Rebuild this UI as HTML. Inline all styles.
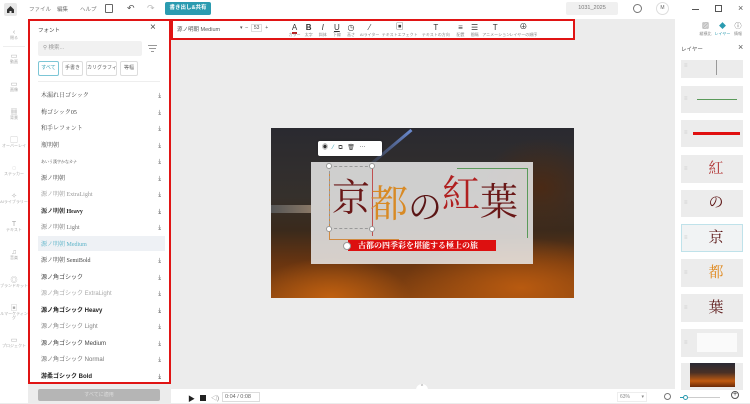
<!DOCTYPE html>
<html><head><meta charset="utf-8"><style>
*{margin:0;padding:0;box-sizing:border-box}
body{width:750px;height:403px;overflow:hidden;background:#ececec;font-family:"Liberation Sans","Noto Sans CJK JP",sans-serif;position:relative;color:#333}
.abs{position:absolute}
.t{font-size:5px;color:#888}
</style></head><body>
<div class="abs" style="left:0;top:0;width:750px;height:19px;background:#fff"></div>
<div class="abs" style="left:4px;top:3px;width:13px;height:13px;background:#e8e8e8;border-radius:2px"></div>
<svg class="abs" style="left:6px;top:5px" width="9" height="9" viewBox="0 0 9 9"><path d="M1 4.5L4.5 1 8 4.5V8H5.5V6h-2v2H1z" fill="#333"/></svg>
<div class="abs t" style="left:29px;top:5px;font-size:5.5px;color:#777">ファイル</div>
<div class="abs t" style="left:57px;top:5px;font-size:5.5px;color:#777">編集</div>
<div class="abs t" style="left:80px;top:5px;font-size:5.5px;color:#777">ヘルプ</div>
<div class="abs" style="left:105px;top:4px;width:8px;height:9px;border:1px solid #666;border-radius:1px"></div>
<div class="abs" style="left:127px;top:3px;font-size:9px;color:#555">↶</div>
<div class="abs" style="left:147px;top:3px;font-size:9px;color:#bbb">↷</div>
<div class="abs" style="left:165px;top:2px;width:46px;height:13px;background:#2b9bb0;border-radius:2px;color:#fff;font-size:5.5px;font-weight:bold;text-align:center;line-height:13px">書き出し&amp;共有</div>
<div class="abs" style="left:566px;top:2px;width:52px;height:13px;background:#f0f0f0;border-radius:2px;font-size:5.5px;color:#777;text-align:center;line-height:13px">1031_2025</div>
<div class="abs" style="left:633px;top:4px;width:9px;height:9px;border:1px solid #777;border-radius:50%"></div>
<div class="abs" style="left:656px;top:2px;width:13px;height:13px;border:1px solid #ddd;border-radius:50%;font-size:5px;text-align:center;line-height:11px;color:#666">M</div>
<div class="abs" style="left:692px;top:9px;width:7px;height:1px;background:#555"></div>
<div class="abs" style="left:715px;top:5px;width:7px;height:7px;border:1px solid #555"></div>
<div class="abs" style="left:738px;top:3px;font-size:9px;color:#555">×</div>

<div class="abs" style="left:0;top:19px;width:28px;height:384px;background:#fff"></div>
<div class="abs" style="left:0;top:19px;width:28px;font-size:4px;color:#aaa;text-align:center;line-height:1">
<div style="margin-top:10px;font-size:7px">‹</div><div>閉る</div>
<div style="height:1px;background:#eee;margin:6px 3px"></div>
<div style="margin-top:4px;font-size:7px">▭</div><div>動画</div>
<div style="margin-top:17px;font-size:7px">▭</div><div>画像</div>
<div style="margin-top:17px;font-size:7px">▦</div><div>背景</div>
<div style="margin-top:17px;font-size:7px">▢</div><div>オーバーレイ</div>
<div style="margin-top:17px;font-size:7px">◌</div><div>ステッカー</div>
<div style="margin-top:17px;font-size:7px">✧</div><div>AIライブラリー</div>
<div style="margin-top:17px;font-size:7px">T</div><div>テキスト</div>
<div style="margin-top:17px;font-size:7px">♫</div><div>音楽</div>
<div style="margin-top:17px;font-size:7px">◎</div><div>ブランドキット</div>
<div style="margin-top:17px;font-size:7px">▣</div><div>ルマーケティング</div>
<div style="margin-top:17px;font-size:7px">▭</div><div>プロジェクト</div>
</div>

<div class="abs" style="left:28px;top:19px;width:143px;height:365px;background:#fff;border:2px solid #e01414"></div>
<div class="abs" style="left:38px;top:26px;font-size:5.5px;color:#444">フォント</div>
<div class="abs" style="left:150px;top:22px;font-size:10px;color:#444">×</div>
<div class="abs" style="left:38px;top:41px;width:104px;height:15px;background:#f1f1f1;border-radius:2px;font-size:5.5px;color:#999;line-height:15px;padding-left:5px">⚲ 検索...</div>
<div class="abs" style="left:148px;top:45px;width:9px;height:1px;background:#999"></div>
<div class="abs" style="left:149px;top:48px;width:7px;height:1px;background:#999"></div>
<div class="abs" style="left:151px;top:51px;width:3px;height:1px;background:#999"></div>
<div class="abs" style="left:38px;top:61px;width:21px;height:15px;border:1px solid #7cc6d6;border-radius:2px;font-size:5px;text-align:center;line-height:13px;color:#2b9bb0">すべて</div>
<div class="abs" style="left:62px;top:61px;width:21px;height:15px;border:1px solid #ddd;border-radius:2px;font-size:5px;text-align:center;line-height:13px;color:#666">手書き</div>
<div class="abs" style="left:86px;top:61px;width:31px;height:15px;border:1px solid #ddd;border-radius:2px;font-size:5px;text-align:center;line-height:13px;color:#666;white-space:nowrap;overflow:hidden">カリグラフィ</div>
<div class="abs" style="left:120px;top:61px;width:18px;height:15px;border:1px solid #ddd;border-radius:2px;font-size:5px;text-align:center;line-height:13px;color:#666">等幅</div>
<div class="abs" style="left:38px;top:81px;width:122px;height:1px;background:#eee"></div>
<div class="abs" style="left:38px;top:236px;width:127px;height:15px;background:#eef1f5"></div>
<div class="abs" style="left:41px;top:88px;width:120px;font-size:6px;line-height:16.5px;font-family:'Liberation Serif','Noto Serif CJK SC',serif;color:#444">
<div>木漏れ日ゴシック<span style="float:right">⤓</span></div>
<div>梅ゴシック05<span style="float:right">⤓</span></div>
<div>和手レフォント<span style="float:right">⤓</span></div>
<div>瓶明朝<span style="float:right">⤓</span></div>
<div style="font-size:4px">あいう漢字かなカナ<span style="float:right;font-size:6px">⤓</span></div>
<div>源ノ明朝<span style="float:right">⤓</span></div>
<div style="color:#999">源ノ明朝 ExtraLight<span style="float:right;color:#444">⤓</span></div>
<div style="font-weight:bold;color:#222">源ノ明朝 Heavy<span style="float:right;font-weight:normal">⤓</span></div>
<div style="color:#777">源ノ明朝 Light<span style="float:right;color:#444">⤓</span></div>
<div style="color:#5ab3c8">源ノ明朝 Medium</div>
<div>源ノ明朝 SemiBold<span style="float:right">⤓</span></div>
<div style="font-family:'Liberation Sans','Noto Sans CJK JP',sans-serif">源ノ角ゴシック<span style="float:right">⤓</span></div>
<div style="font-family:'Liberation Sans','Noto Sans CJK JP',sans-serif;color:#aaa">源ノ角ゴシック ExtraLight<span style="float:right;color:#444">⤓</span></div>
<div style="font-family:'Liberation Sans','Noto Sans CJK JP',sans-serif;font-weight:bold;color:#222">源ノ角ゴシック Heavy<span style="float:right;font-weight:normal">⤓</span></div>
<div style="font-family:'Liberation Sans','Noto Sans CJK JP',sans-serif;color:#888">源ノ角ゴシック Light<span style="float:right;color:#444">⤓</span></div>
<div style="font-family:'Liberation Sans','Noto Sans CJK JP',sans-serif">源ノ角ゴシック Medium<span style="float:right">⤓</span></div>
<div style="font-family:'Liberation Sans','Noto Sans CJK JP',sans-serif;color:#777">源ノ角ゴシック Normal<span style="float:right;color:#444">⤓</span></div>
<div style="font-family:'Liberation Sans','Noto Sans CJK JP',sans-serif;font-weight:bold;color:#222">游柔ゴシック Bold<span style="float:right;font-weight:normal">⤓</span></div>
</div>
<div class="abs" style="left:38px;top:389px;width:122px;height:12px;background:#b5b5b5;border-radius:2px;font-size:5px;color:#ddd;text-align:center;line-height:12px">すべてに適用</div>

<div class="abs" style="left:171px;top:19px;width:404px;height:21px;background:#fff;border:2px solid #e01414"></div>
<div class="abs" style="left:177px;top:25px;font-size:5.5px;color:#555">源ノ明朝 Medium</div>
<div class="abs" style="left:240px;top:25px;font-size:5px;color:#555">▾ &nbsp;– &nbsp;<span style="border:1px solid #ddd;padding:0 2px">53</span> &nbsp;+</div>
<div class="abs" style="left:288px;top:21px;font-size:4px;color:#888;white-space:nowrap;word-spacing:0">
<span style="display:inline-block;text-align:center;width:13px"><span style="font-size:8px;color:#333;border-bottom:2px solid #b22">A</span><br>カラー</span>
<span style="display:inline-block;text-align:center;width:13px"><b style="font-size:8px;color:#333">B</b><br>太字</span>
<span style="display:inline-block;text-align:center;width:13px"><i style="font-size:8px;color:#333">I</i><br>斜体</span>
<span style="display:inline-block;text-align:center;width:13px"><u style="font-size:8px;color:#333">U</u><br>下線</span>
<span style="display:inline-block;text-align:center;width:13px"><span style="font-size:8px;color:#333">◷</span><br>高さ</span>
<span style="display:inline-block;text-align:center;width:22px"><span style="font-size:8px;color:#333">⁄</span><br>AIライター</span>
<span style="display:inline-block;text-align:center;width:36px"><span style="font-size:8px;color:#333">▣</span><br>テキストエフェクト</span>
<span style="display:inline-block;text-align:center;width:34px"><span style="font-size:8px;color:#333">T</span><br>テキストの方向</span>
<span style="display:inline-block;text-align:center;width:13px"><span style="font-size:8px;color:#333">≡</span><br>配置</span>
<span style="display:inline-block;text-align:center;width:13px"><span style="font-size:8px;color:#333">☰</span><br>間隔</span>
<span style="display:inline-block;text-align:center;width:26px"><span style="font-size:8px;color:#333">T</span><br>アニメーション</span>
<span style="display:inline-block;text-align:center;width:28px"><span style="font-size:8px;color:#333">⊕</span><br>レイヤーの順序</span>
</div>

<div class="abs" style="left:675px;top:19px;width:75px;height:384px;background:#fff"></div>
<div class="abs" style="left:697px;top:21px;width:53px;font-size:4px;color:#888;white-space:nowrap">
<span style="display:inline-block;text-align:center;width:17px"><span style="font-size:7px;color:#555">▨</span><br>縦横比</span><span style="display:inline-block;text-align:center;width:17px;color:#2b9bb0"><span style="font-size:7px">◆</span><br>レイヤー</span><span style="display:inline-block;text-align:center;width:14px"><span style="font-size:7px;color:#555">ⓘ</span><br>情報</span>
</div>
<div class="abs" style="left:675px;top:40px;width:75px;height:350px;background:#fff"></div>
<div class="abs" style="left:681px;top:45px;font-size:5.5px;color:#555">レイヤー</div>
<div class="abs" style="left:738px;top:42px;font-size:9px;color:#555">×</div>
<div class="abs" style="left:681px;top:60px;width:62px;height:18px;background:#ececec"></div>
<div class="abs" style="left:716px;top:60px;width:1px;height:15px;background:#999"></div>
<div class="abs" style="left:681px;top:86px;width:62px;height:27px;background:#ececec"></div>
<div class="abs" style="left:697px;top:99px;width:40px;height:1px;background:#5a9a5a"></div>
<div class="abs" style="left:681px;top:120px;width:62px;height:27px;background:#ececec"></div>
<div class="abs" style="left:693px;top:132px;width:47px;height:3px;background:#e01010"></div>
<div class="abs" style="left:681px;top:155px;width:62px;height:28px;background:#ececec;font:15px 'Liberation Serif','Noto Serif CJK SC',serif;color:#b03030;text-align:center;padding-left:8px;line-height:28px">紅</div>
<div class="abs" style="left:681px;top:190px;width:62px;height:27px;background:#ececec;font:15px 'Liberation Serif','Noto Serif CJK SC',serif;color:#5a1010;text-align:center;padding-left:8px;line-height:27px">の</div>
<div class="abs" style="left:681px;top:224px;width:62px;height:28px;background:#f1f3f4;border:1px solid #bfe2ea;font:15px 'Liberation Serif','Noto Serif CJK SC',serif;color:#5a1515;text-align:center;padding-left:8px;line-height:26px">京</div>
<div class="abs" style="left:681px;top:259px;width:62px;height:28px;background:#ececec;font:15px 'Liberation Serif','Noto Serif CJK SC',serif;color:#e08a20;text-align:center;padding-left:8px;line-height:28px">都</div>
<div class="abs" style="left:681px;top:294px;width:62px;height:28px;background:#ececec;font:15px 'Liberation Serif','Noto Serif CJK SC',serif;color:#5a1515;text-align:center;padding-left:8px;line-height:28px">葉</div>
<div class="abs" style="left:681px;top:329px;width:62px;height:28px;background:#ececec"></div>
<div class="abs" style="left:697px;top:333px;width:40px;height:19px;background:#fafafa"></div>
<div class="abs" style="left:681px;top:363px;width:62px;height:27px;background:#ececec"></div>
<div class="abs" style="left:690px;top:363px;width:45px;height:24px;background:linear-gradient(180deg,#2a2a35 0%,#4a3025 40%,#c05a10 75%,#6a2a08 100%)"></div>

<div class="abs" style="left:684px;top:0;width:8px;font-size:6px;color:#ccc;line-height:1">
<div style="position:absolute;top:63px">≡</div><div style="position:absolute;top:96px">≡</div><div style="position:absolute;top:130px">≡</div><div style="position:absolute;top:166px">≡</div><div style="position:absolute;top:200px">≡</div><div style="position:absolute;top:235px">≡</div><div style="position:absolute;top:270px">≡</div><div style="position:absolute;top:305px">≡</div><div style="position:absolute;top:340px">≡</div>
</div>

<div class="abs" style="left:271px;top:128px;width:303px;height:170px;background:
radial-gradient(ellipse 80px 40px at 60px 170px,#c06010,transparent),
radial-gradient(ellipse 120px 50px at 250px 160px,#b85a10,transparent),
radial-gradient(ellipse 60px 50px at 270px 60px,#4a2a15,transparent),
linear-gradient(180deg,#2a2a30 0%,#35302c 40%,#3a2a1c 60%,#6a3510 80%,#8a4510 100%)"></div>
<div class="abs" style="left:271px;top:205px;width:40px;height:8px;background:linear-gradient(90deg,#555,#887766)"></div>
<div class="abs" style="left:410px;top:130px;width:3px;height:60px;background:linear-gradient(#6a8ad0,transparent);transform:rotate(50deg);transform-origin:top"></div>
<div class="abs" style="left:311px;top:162px;width:222px;height:102px;background:rgba(235,235,235,0.85)"></div>
<div class="abs" style="left:329px;top:171px;width:1px;height:68px;background:#d08a40"></div>
<div class="abs" style="left:329px;top:239px;width:70px;height:1px;background:#d08a40"></div>
<div class="abs" style="left:457px;top:168px;width:70px;height:1px;background:#5a9a5a"></div>
<div class="abs" style="left:527px;top:168px;width:1px;height:70px;background:#5a9a5a"></div>
<div class="abs" style="left:329px;top:166px;width:44px;height:63px;border:1px dashed #999"></div>
<div class="abs" style="left:372px;top:166px;width:1px;height:70px;background:#c05050"></div>
<div class="abs" style="left:326px;top:163px;width:6px;height:6px;border-radius:50%;background:#fff;border:1px solid #999"></div>
<div class="abs" style="left:369px;top:163px;width:6px;height:6px;border-radius:50%;background:#fff;border:1px solid #999"></div>
<div class="abs" style="left:326px;top:226px;width:6px;height:6px;border-radius:50%;background:#fff;border:1px solid #999"></div>
<div class="abs" style="left:369px;top:226px;width:6px;height:6px;border-radius:50%;background:#fff;border:1px solid #999"></div>
<div class="abs" style="left:332px;top:180px;font:38px/1 'Liberation Serif','Noto Serif CJK SC',serif;white-space:nowrap"><span style="color:#6a1818">京</span><span style="color:#d88a25;position:relative;top:6px">都</span><span style="color:#5a1515;font-size:34px;position:relative;top:8px">の</span><span style="color:#b02020;position:relative;top:-4px">紅</span><span style="color:#6a1818;position:relative;top:4px">葉</span></div>
<div class="abs" style="left:348px;top:240px;width:148px;height:11px;background:#dd1010;color:#fff;font:bold 8px/11px 'Liberation Serif','Noto Serif CJK SC',serif;padding-left:10px;white-space:nowrap">古都の四季彩を堪能する極上の旅</div>
<div class="abs" style="left:343px;top:242px;width:8px;height:8px;border-radius:50%;background:#fff;border:1px solid #999"></div>
<div class="abs" style="left:318px;top:141px;width:64px;height:15px;background:#fff;border-radius:2px;box-shadow:0 0 2px rgba(0,0,0,.3);font-size:6px;line-height:15px;color:#333;padding-left:4px;word-spacing:3px">◉ <span style="color:#2b9bb0">⁄</span> ⧉ 🗑 ⋯</div>

<div class="abs" style="left:171px;top:389px;width:504px;height:14px;background:#fff"></div>
<div class="abs" style="left:416px;top:384px;width:12px;height:6px;background:#fff;border-radius:6px 6px 0 0;font-size:5px;text-align:center;color:#888">^</div>
<div class="abs" style="left:188px;top:394px;font-size:7px;color:#222">▶</div>
<div class="abs" style="left:200px;top:395px;width:6px;height:6px;background:#222"></div>
<div class="abs" style="left:211px;top:393px;font-size:6px;color:#777">◁)</div>
<div class="abs" style="left:222px;top:392px;width:38px;height:10px;border:1px solid #ddd;font-size:5.5px;color:#666;line-height:8px;padding-left:2px">0:04 / 0:08</div>
<div class="abs" style="left:617px;top:392px;width:30px;height:10px;border:1px solid #eee;font-size:5px;color:#888;line-height:8px;padding-left:2px">63% <span style="float:right;padding-right:2px">▾</span></div>
<div class="abs" style="left:664px;top:393px;width:7px;height:7px;border:1px solid #777;border-radius:50%"></div>
<div class="abs" style="left:680px;top:397px;width:40px;height:1px;background:#ccc"></div>
<div class="abs" style="left:680px;top:397px;width:5px;height:1px;background:#2b9bb0"></div>
<div class="abs" style="left:683px;top:395px;width:5px;height:5px;border:1px solid #2b9bb0;border-radius:50%;background:#fff"></div>
<div class="abs" style="left:731px;top:391px;width:8px;height:8px;border:1px solid #555;border-radius:50%;font-size:7px;line-height:6px;text-align:center">+</div>
</body></html>
